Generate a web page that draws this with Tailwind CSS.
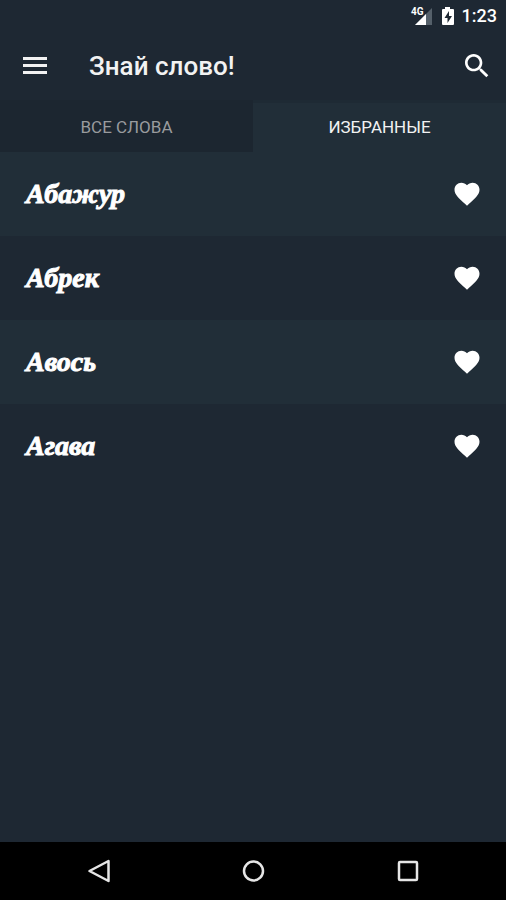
<!DOCTYPE html>
<html lang="ru">
<head>
  <meta charset="UTF-8">
  <meta name="viewport" content="width=device-width, initial-scale=1">
  <title>Знай слово!</title>
  <script src="https://cdn.jsdelivr.net/npm/@tailwindcss/browser@4"></script>
</head>
<body class="flex flex-col min-h-screen bg-[#1e2833] text-white font-[Roboto,sans-serif]">
  <!-- status bar -->
  <div class="flex items-center justify-end h-8 pr-[9px]">
    <svg class="w-6 h-5 mr-[6px]" viewBox="0 0 24 20" role="img" aria-label="4G">
      <path d="M22 2v17H5z" fill="#55606a"/>
      <path d="M16 8v11H5z" fill="#fff"/>
      <text x="1" y="9" font-size="10" font-weight="700" fill="#fff">4G</text>
    </svg>
    <svg class="w-4 h-5 mr-[6px]" viewBox="0 0 16 20" role="img" aria-label="Батарея">
      <path d="M5 1h5v2h3q1 0 1 1v14q0 1-1 1H3q-1 0-1-1V4q0-1 1-1h2z" fill="#fff"/>
      <path d="M9 5l-4.500 7H7.500v5L12 10H9z" fill="#1e2833"/>
    </svg>
    <span class="text-lg leading-8 font-medium">1:23</span>
  </div>

  <header class="flex items-center h-[68px] pl-[23px] pr-[13px]">
    <button type="button" aria-label="Меню" class="w-6 h-6">
      <svg class="w-6 h-6" viewBox="0 0 24 24" fill="#f2f2f2">
        <path d="M0 3h24v3H0zM0 10h24v3H0zM0 17h24v3H0z"/>
      </svg>
    </button>
    <h1 class="ml-[42px] text-[26px] leading-8 font-medium text-[#f2f2f2]">Знай слово!</h1>
    <button type="button" aria-label="Поиск" class="ml-auto w-8 h-8">
      <svg class="w-8 h-8" viewBox="0 0 24 24" fill="#fff">
        <path d="M15.500 14h-.79l-.28-.27C15.410 12.590 16 11.110 16 9.500 16 5.910 13.090 3 9.500 3S3 5.910 3 9.500 5.910 16 9.500 16c1.610 0 3.090-.59 4.230-1.570l.27.28v.79l5 4.990L20.490 19l-4.990-5zm-6 0C7.010 14 5 11.990 5 9.500S7.010 5 9.500 5 14 7.010 14 9.500 11.990 14 9.500 14z"/>
      </svg>
    </button>
  </header>

  <nav class="grid grid-cols-2 text-[17px]">
    <button type="button" class="h-[52px] border-t-3 border-[#1c2630] bg-[#1c2630] text-[#999b9e]">ВСЕ СЛОВА</button>
    <button type="button" class="h-[52px] border-t-3 border-[#1e2a34] bg-[#212e38] text-[#f2f2f2]">ИЗБРАННЫЕ</button>
  </nav>

  <main class="flex-1">
    <ul class="font-['Liberation_Serif',serif] text-[28px] leading-8 font-bold italic">
      <li class="flex items-center justify-between h-[84px] pl-[26px] pr-6 even:bg-[#1e2833] odd:bg-[#212e38]">
        <span class="[-webkit-text-stroke:1px_white]">Абажур</span>
        <button type="button" aria-label="Убрать из избранного" class="w-[30px] h-[30px]">
          <svg class="w-[30px] h-[30px]" viewBox="0 0 24 24" fill="#fff"><path d="M12 21.350l-1.450-1.320C5.400 15.360 2 12.280 2 8.500 2 5.420 4.420 3 7.500 3c1.740 0 3.410.81 4.500 2.090C13.090 3.810 14.760 3 16.500 3 19.580 3 22 5.420 22 8.500c0 3.780-3.400 6.860-8.550 11.540L12 21.350z"/></svg>
        </button>
      </li>
      <li class="flex items-center justify-between h-[84px] pl-[26px] pr-6 even:bg-[#1e2833] odd:bg-[#212e38]">
        <span class="[-webkit-text-stroke:1px_white]">Абрек</span>
        <button type="button" aria-label="Убрать из избранного" class="w-[30px] h-[30px]">
          <svg class="w-[30px] h-[30px]" viewBox="0 0 24 24" fill="#fff"><path d="M12 21.350l-1.450-1.320C5.400 15.360 2 12.280 2 8.500 2 5.420 4.420 3 7.500 3c1.740 0 3.410.81 4.500 2.090C13.090 3.810 14.760 3 16.500 3 19.580 3 22 5.420 22 8.500c0 3.780-3.400 6.860-8.550 11.540L12 21.350z"/></svg>
        </button>
      </li>
      <li class="flex items-center justify-between h-[84px] pl-[26px] pr-6 even:bg-[#1e2833] odd:bg-[#212e38]">
        <span class="[-webkit-text-stroke:1px_white]">Авось</span>
        <button type="button" aria-label="Убрать из избранного" class="w-[30px] h-[30px]">
          <svg class="w-[30px] h-[30px]" viewBox="0 0 24 24" fill="#fff"><path d="M12 21.350l-1.450-1.320C5.400 15.360 2 12.280 2 8.500 2 5.420 4.420 3 7.500 3c1.740 0 3.410.81 4.500 2.090C13.090 3.810 14.760 3 16.500 3 19.580 3 22 5.420 22 8.500c0 3.780-3.400 6.860-8.550 11.540L12 21.350z"/></svg>
        </button>
      </li>
      <li class="flex items-center justify-between h-[84px] pl-[26px] pr-6 even:bg-[#1e2833] odd:bg-[#212e38]">
        <span class="[-webkit-text-stroke:1px_white]">Агава</span>
        <button type="button" aria-label="Убрать из избранного" class="w-[30px] h-[30px]">
          <svg class="w-[30px] h-[30px]" viewBox="0 0 24 24" fill="#fff"><path d="M12 21.350l-1.450-1.320C5.400 15.360 2 12.280 2 8.500 2 5.420 4.420 3 7.500 3c1.740 0 3.410.81 4.500 2.090C13.090 3.810 14.760 3 16.500 3 19.580 3 22 5.420 22 8.500c0 3.780-3.400 6.860-8.550 11.540L12 21.350z"/></svg>
        </button>
      </li>
    </ul>
  </main>

  <!-- system buttons -->
  <footer class="grid grid-cols-3 place-items-center h-[58px] px-[22px] bg-black">
    <button type="button" aria-label="Назад">
      <svg class="w-6 h-6" viewBox="0 0 24 24" fill="none" stroke="#e6e6e6" stroke-width="2.500" stroke-linejoin="round"><path d="M21.500 2v20L2.500 12z"/></svg>
    </button>
    <button type="button" aria-label="Домой">
      <svg class="w-6 h-6" viewBox="0 0 24 24" fill="none" stroke="#e6e6e6" stroke-width="2.500"><circle cx="12.500" cy="12" r="9.500"/></svg>
    </button>
    <button type="button" aria-label="Недавние">
      <svg class="w-6 h-6" viewBox="0 0 24 24" fill="none" stroke="#e6e6e6" stroke-width="2.500"><rect x="4" y="3" width="18" height="18" rx="1"/></svg>
    </button>
  </footer>
</body>
</html>
